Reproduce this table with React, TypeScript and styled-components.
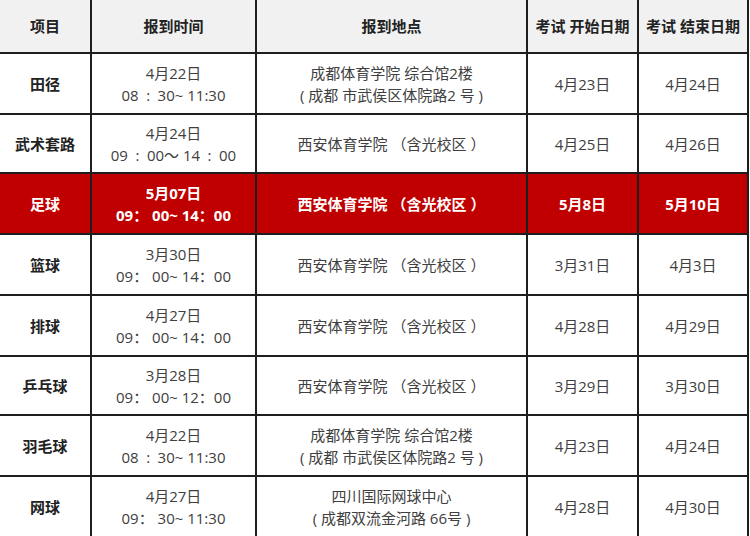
import React from "react";
import styled, { createGlobalStyle, css } from "styled-components";

const Global = createGlobalStyle`
  html, body { margin: 0; padding: 0; background: #ffffff; }
  body { font-family: "Open Sans", "Noto Sans CJK SC", sans-serif; }
`;

const Page = styled.div`
  width: 750px;
  height: 536px;
  overflow: hidden;
  background: #ffffff;
`;

const Table = styled.div`
  width: 749px;
  display: flex;
  flex-direction: column;
  gap: 2px;
  background: #1e1e1e;
  padding-right: 2px;
  box-sizing: border-box;
`;

const Row = styled.div<{ $h: number }>`
  display: grid;
  grid-template-columns: 90px 163px 269px 109px 108px;
  column-gap: 2px;
  height: ${(p) => p.$h}px;
`;

type Variant = "head" | "body" | "hot";

const Cell = styled.div<{ $v: Variant; $first?: boolean }>`
  display: flex;
  flex-direction: column;
  align-items: center;
  justify-content: center;
  text-align: center;
  font-family: "Open Sans", "Noto Sans CJK SC", sans-serif;
  font-size: 15px;
  line-height: 22px;
  white-space: pre;
  ${(p) =>
    p.$v === "head"
      ? css`
          background: #f1f1f1;
          color: #222222;
          font-weight: 700;
        `
      : p.$v === "hot"
      ? css`
          background: #c00000;
          color: #ffffff;
          font-weight: 700;
        `
      : css`
          background: #ffffff;
          color: ${p.$first ? "#222222" : "#404040"};
          font-weight: ${p.$first ? 700 : 400};
        `}
`;

type Data = {
  name: string;
  date: string;
  time: string;
  place: string[];
  start: string;
  end: string;
  hot?: boolean;
  h: number;
};

const XIAN = "西安体育学院 （含光校区 ）";
const CHENGDU = ["成都体育学院 综合馆2楼", "( 成都 市武侯区体院路2 号 )"];
const T_0830 = "08\u2002:\u200230~ 11:30";
const T_0900 = "09： 00~ 14：00";

const rows: Data[] = [
  { name: "田径", date: "4月22日", time: T_0830, place: CHENGDU, start: "4月23日", end: "4月24日", h: 59 },
  { name: "武术套路", date: "4月24日", time: "09\u2002:\u200200〜 14\u2002:\u200200", place: [XIAN], start: "4月25日", end: "4月26日", h: 57 },
  { name: "足球", date: "5月07日", time: T_0900, place: [XIAN], start: "5月8日", end: "5月10日", hot: true, h: 59 },
  { name: "篮球", date: "3月30日", time: T_0900, place: [XIAN], start: "3月31日", end: "4月3日", h: 59 },
  { name: "排球", date: "4月27日", time: T_0900, place: [XIAN], start: "4月28日", end: "4月29日", h: 59 },
  { name: "乒乓球", date: "3月28日", time: "09： 00~ 12：00", place: [XIAN], start: "3月29日", end: "3月30日", h: 57 },
  { name: "羽毛球", date: "4月22日", time: T_0830, place: CHENGDU, start: "4月23日", end: "4月24日", h: 59 },
  { name: "网球", date: "4月27日", time: "09： 30~ 11:30", place: ["四川国际网球中心", "( 成都双流金河路 66号 )"], start: "4月28日", end: "4月30日", h: 59 },
];

const headers = ["项目", "报到时间", "报到地点", "考试 开始日期", "考试 结束日期"];

export default function App() {
  return (
    <Page>
      <Global />
      <Table>
        <Row $h={52}>
          {headers.map((h) => (
            <Cell key={h} $v="head">
              {h}
            </Cell>
          ))}
        </Row>
        {rows.map((r) => {
          const v: Variant = r.hot ? "hot" : "body";
          return (
            <Row key={r.name} $h={r.h}>
              <Cell $v={v} $first>
                {r.name}
              </Cell>
              <Cell $v={v}>
                <span>{r.date}</span>
                <span>{r.time}</span>
              </Cell>
              <Cell $v={v}>
                {r.place.map((p) => (
                  <span key={p}>{p}</span>
                ))}
              </Cell>
              <Cell $v={v}>{r.start}</Cell>
              <Cell $v={v}>{r.end}</Cell>
            </Row>
          );
        })}
      </Table>
    </Page>
  );
}
